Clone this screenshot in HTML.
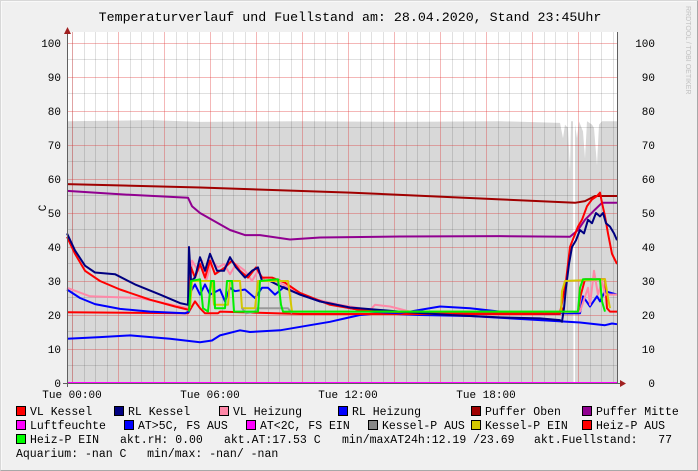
<!DOCTYPE html>
<html><head><meta charset="utf-8"><style>
html,body{margin:0;padding:0;background:#f0f0f0;width:698px;height:471px;overflow:hidden}
svg{display:block}
text{font-family:"Liberation Mono","DejaVu Sans Mono",monospace;fill:#000}
</style></head><body>
<svg width="698" height="471" viewBox="0 0 698 471" xmlns="http://www.w3.org/2000/svg">
<rect x="0" y="0" width="698" height="471" fill="#f0f0f0"/>
<path d="M0.5 470.5V0.5H697.5" stroke="#d8d8d8" fill="none"/>
<path d="M697.5 0.5V470.5H0.5" stroke="#a8a8a8" fill="none"/>
<path d="M1.5 469.5V1.5H696.5" stroke="#ffffff" fill="none" opacity="0.6"/>
<text x="350" y="21" font-size="13.3" text-anchor="middle">Temperaturverlauf und Fuellstand am: 28.04.2020, Stand 23:45Uhr</text>
<text transform="translate(686,6) rotate(90)" font-size="7" style="fill:#c0c0c0;font-family:'Liberation Sans',sans-serif" >RRDTOOL / TOBI OETIKER</text>
<text transform="translate(46,208) rotate(-90)" font-size="11" text-anchor="middle">C</text>
<rect x="67" y="32" width="550" height="351" fill="#ffffff"/>
<g transform="translate(0,383) scale(1,-3.4)">
<polygon fill="#d8d8d8" points="67,0 67,77 150,77.3 200,76.8 300,77 400,76.8 500,77 560,76.5 563,72 565,76 568,75 570,62 571,77 573,77 573.5,0 575,0 575,76 577,72 579,77 583,74 585,66 587,77 592,76 594,75 597,64 599,76 602,77 617,77 617,0"/>
</g>
<g stroke-width="1" fill="none">
<g stroke="#000" stroke-opacity="0.12">
<path d="M72.5 32V383M84.5 32V383M95.5 32V383M107.5 32V383M130.5 32V383M141.5 32V383M153.5 32V383M176.5 32V383M187.5 32V383M199.5 32V383M222.5 32V383M233.5 32V383M245.5 32V383M268.5 32V383M279.5 32V383M291.5 32V383M314.5 32V383M325.5 32V383M337.5 32V383M360.5 32V383M371.5 32V383M383.5 32V383M406.5 32V383M417.5 32V383M429.5 32V383M452.5 32V383M463.5 32V383M475.5 32V383M498.5 32V383M509.5 32V383M521.5 32V383M544.5 32V383M555.5 32V383M567.5 32V383M590.5 32V383M601.5 32V383M613.5 32V383"/>
<path d="M67 365.5H617M67 331.5H617M67 297.5H617M67 263.5H617M67 229.5H617M67 195.5H617M67 161.5H617M67 127.5H617M67 93.5H617M67 59.5H617"/>
</g>
<g stroke="#e03030" stroke-opacity="0.35">
<path d="M72.5 32V383M118.5 32V383M164.5 32V383M210.5 32V383M256.5 32V383M302.5 32V383M348.5 32V383M394.5 32V383M440.5 32V383M486.5 32V383M532.5 32V383M578.5 32V383"/>
<path d="M67 349.5H617M67 315.5H617M67 281.5H617M67 247.5H617M67 213.5H617M67 179.5H617M67 145.5H617M67 111.5H617M67 77.5H617M67 43.5H617"/>
</g>
</g>
<g transform="translate(0,383) scale(1,-3.4)" fill="none" stroke-width="2" stroke-linejoin="round">
<polyline vector-effect="non-scaling-stroke" stroke="#a00000" points="67,58.5 200,57.5 350,56 500,54 575,53 585,53.5 595,55 617,55"/>
<polyline vector-effect="non-scaling-stroke" stroke="#900090" points="67,56.5 120,55.5 188,54.5 192,52 200,50 215,47.5 230,45 245,43.5 260,43.5 290,42.2 320,42.8 400,43.1 500,43.2 570,43 578,45 585,48 595,51 602,53 617,53"/>
<polyline vector-effect="non-scaling-stroke" stroke="#0000ff" points="67,13 100,13.5 130,14 170,13 200,12 212,12.5 220,14 240,15.5 250,15 280,15.5 310,17 330,18 345,19 360,20 380,20.5 420,20 470,19.7 500,19.2 540,18.5 580,17.8 605,17 612,17.5 617,17.3"/>
<polyline vector-effect="non-scaling-stroke" stroke="#ff0000" points="67,20.8 188,20.5 190,21.5 195,24 200,22 205,20.5 218,20.5 220,21 300,20.3 560,20.3 562,22 565,20.5 578,20.5 580,25 585,30.5 605,30.5 607,22 610,21 617,21"/>
<polyline vector-effect="non-scaling-stroke" stroke="#0000ff" points="67,27.5 80,25 95,23.2 120,21.8 150,21 185,20.5 189,21 191,27 195,29 200,26 205,29 210,26 220,27.5 225,24 230,28 235,27 245,27.5 255,25 262,28 268,28 275,26 285,28.5 300,26 320,24 350,22 370,21 400,20.5 420,21.5 440,22.5 470,22 500,21 540,20.5 580,20.5 583,25.5 590,22.5 597,25.5 600,24 605,27 617,26"/>
<polyline vector-effect="non-scaling-stroke" stroke="#ff88a8" points="67,28 90,25.5 140,25 180,22.5 189,22 192,36 198,33 202,36 206,30 212,36 218,34 224,35 230,32 236,35 245,33 252,30 258,33 265,30 275,30 290,28 310,25 340,23 370,21.5 375,23 390,22.5 410,21 560,20.8 580,21 588,28 590,23 594,33 598,26 602,30 605,26 617,26"/>
<polyline vector-effect="non-scaling-stroke" stroke="#ff0000" points="67,43 75,38 85,33 100,30 120,27.5 150,24.5 175,22.5 189,21.5 191,34 195,31 200,35 205,31 210,36 215,32 225,34 232,36 240,33 248,31 256,34 262,31 272,31 285,29.5 300,26.5 330,23 360,21.5 400,20.8 500,20.5 560,20.5 566,30 570,40 574,43 578,46 582,48 587,52 592,54 597,55 600,56 602,53 605,49 608,44 612,38 617,35"/>
<polyline vector-effect="non-scaling-stroke" stroke="#000080" points="67,44 75,39 85,34.5 95,32.5 115,32 135,29 160,26 180,23.5 188,23 189,40 191,30 195,31 200,37 205,33 210,38 217,33 224,33 230,37 236,34 245,31 252,33 258,34 262,30 270,30 280,28.5 300,26 320,24 350,22.2 400,21 450,20 500,19.3 540,19 560,18.5 562,18 564,22 566,28 569,35 572,40 576,42 580,45 584,44 588,48 592,47 596,50 600,49 603,50 606,47 610,46 614,44 617,42"/>
<polyline vector-effect="non-scaling-stroke" stroke="#d4c800" points="190,22 192,30 212,30 214,23 228,23 230,30 240,30 242,22 255,22 258,30 288,30 292,21 561,21 562,27 565,30 605,30.5 608,25 610,22"/>
<polyline vector-effect="non-scaling-stroke" stroke="#999999" points="242,22 246,20.5 255,21 257,22 288,22 292,20.5"/>
<polyline vector-effect="non-scaling-stroke" stroke="#00ee00" points="189,21 191,30 200,30.5 203,22 208,21 211,30 214,30 215,22 225,22 227,30 232,30 234,21 237,21 258,21 260,30 278,30.5 281,23 283,21 578,21 580,28 583,30.5 600,30.5 602,24 605,21"/>
<line vector-effect="non-scaling-stroke" stroke="#ff00ff" x1="67" y1="0" x2="617" y2="0"/>
</g>
<path d="M67.5 34V387" stroke="#606060"/>
<path d="M63 383.5H622" stroke="#606060"/>
<polygon points="64,34 71,34 67.5,27" fill="#a02020"/>
<polygon points="620,380 620,387 626,383.5" fill="#a02020"/>
<path d="M617.5 32V383" stroke="#606060"/>
<g font-size="11" text-anchor="end">
<text x="61" y="47">100</text><text x="61" y="81">90</text><text x="61" y="115">80</text><text x="61" y="149">70</text><text x="61" y="183">60</text><text x="61" y="217">50</text><text x="61" y="251">40</text><text x="61" y="285">30</text><text x="61" y="319">20</text><text x="61" y="353">10</text><text x="61" y="387">0</text>
<text x="655" y="47">100</text><text x="655" y="81">90</text><text x="655" y="115">80</text><text x="655" y="149">70</text><text x="655" y="183">60</text><text x="655" y="217">50</text><text x="655" y="251">40</text><text x="655" y="285">30</text><text x="655" y="319">20</text><text x="655" y="353">10</text><text x="655" y="387">0</text>
</g>
<g font-size="11" text-anchor="middle">
<text x="72" y="398">Tue 00:00</text><text x="210" y="398">Tue 06:00</text><text x="348" y="398">Tue 12:00</text><text x="486" y="398">Tue 18:00</text>
</g>
<g stroke="#000" stroke-width="1">
<rect x="16.5" y="406.5" width="9" height="9" fill="#ff0000"/>
<rect x="114.5" y="406.5" width="9" height="9" fill="#000080"/>
<rect x="219.5" y="406.5" width="9" height="9" fill="#ff88a8"/>
<rect x="338.5" y="406.5" width="9" height="9" fill="#0000ff"/>
<rect x="471.5" y="406.5" width="9" height="9" fill="#a00000"/>
<rect x="582.5" y="406.5" width="9" height="9" fill="#900090"/>
<rect x="16.5" y="420.5" width="9" height="9" fill="#ff00ff"/>
<rect x="124.5" y="420.5" width="9" height="9" fill="#0000ff"/>
<rect x="246.5" y="420.5" width="9" height="9" fill="#ff00ff"/>
<rect x="368.5" y="420.5" width="9" height="9" fill="#888888"/>
<rect x="471.5" y="420.5" width="9" height="9" fill="#d4c800"/>
<rect x="582.5" y="420.5" width="9" height="9" fill="#ff0000"/>
<rect x="16.5" y="434.5" width="9" height="9" fill="#00ff00"/>
</g>
<g font-size="11.5">
<text x="30" y="415">VL Kessel</text><text x="128" y="415">RL Kessel</text><text x="233" y="415">VL Heizung</text><text x="352" y="415">RL Heizung</text><text x="485" y="415">Puffer Oben</text><text x="596" y="415">Puffer Mitte</text>
<text x="30" y="429">Luftfeuchte</text><text x="138" y="429">AT&gt;5C, FS AUS</text><text x="260" y="429">AT&lt;2C, FS EIN</text><text x="382" y="429">Kessel-P AUS</text><text x="485" y="429">Kessel-P EIN</text><text x="596" y="429">Heiz-P AUS</text>
<text x="30" y="443">Heiz-P EIN</text>
<text x="120" y="443">akt.rH: 0.00</text>
<text x="224" y="443">akt.AT:17.53 C</text>
<text x="342" y="443">min/maxAT24h:12.19 /23.69</text>
<text x="534" y="443" xml:space="preserve">akt.Fuellstand:   77</text>
<text x="16" y="457" xml:space="preserve">Aquarium: -nan C   min/max: -nan/ -nan</text>
</g>
</svg>
</body></html>
